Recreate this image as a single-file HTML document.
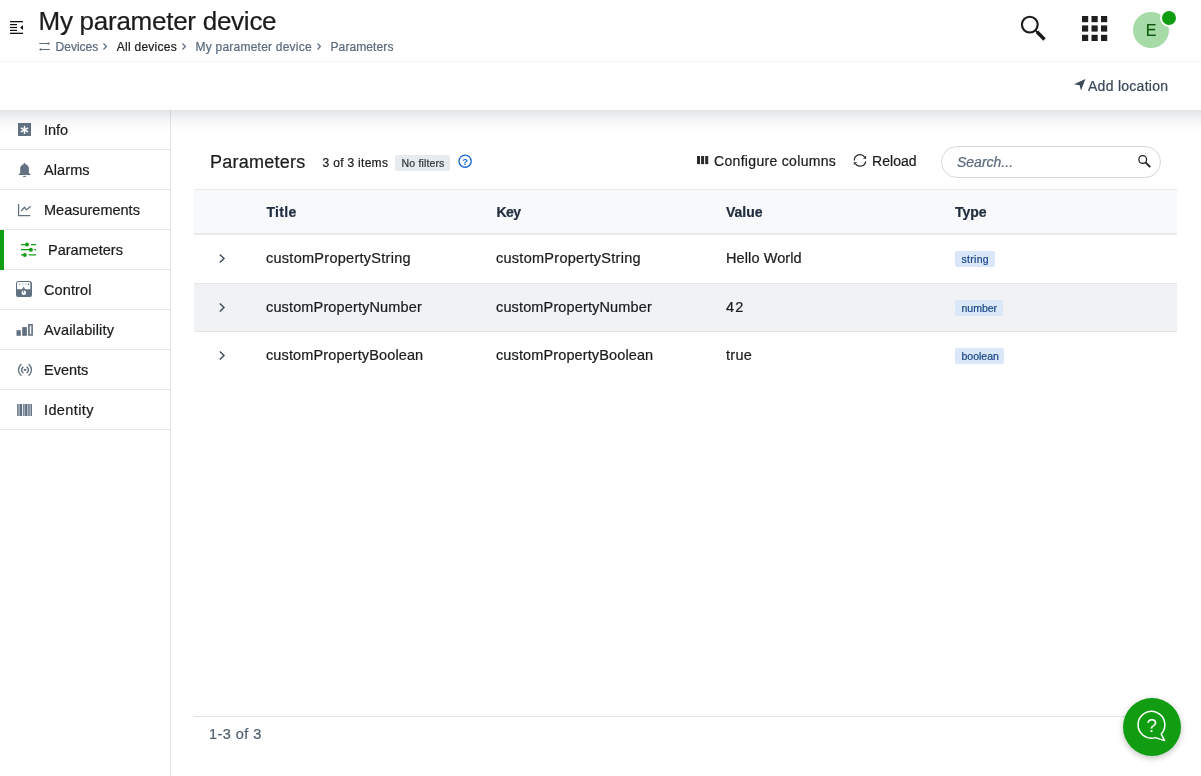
<!DOCTYPE html>
<html lang="en">
<head>
<meta charset="utf-8">
<title>My parameter device</title>
<style>
*{box-sizing:border-box;margin:0;padding:0}
html,body{width:1201px;height:776px;overflow:hidden;background:#fff}
body{font-family:"Liberation Sans",sans-serif;color:#1a1c1e;position:relative;font-size:14px}
.abs{position:absolute;white-space:nowrap;line-height:1}
.abs,.nav span,#search span,#nofilter span,.tag span,#avatar span{-webkit-text-stroke:.22px currentColor}
svg{position:absolute;overflow:visible}
/* header */
#header{position:absolute;left:0;top:0;width:1201px;height:62px;background:#fff;border-bottom:1px solid #f5f6f8;box-shadow:inset 0 -1px 0 0 #fbfcfc}
#title{left:38.5px;top:8px;font-size:26px;color:#1a1c1e;letter-spacing:-.26px}
.bc{top:41px;font-size:12px;color:#5c6b7d}
.bc.dark{color:#1a1c1e}
#avatar{position:absolute;left:1133px;top:12px;width:36px;height:36px;border-radius:50%;background:#a6daa6}
#avatar span{position:absolute;left:0;width:36px;text-align:center;top:10.5px;font-size:16px;line-height:1;color:#0d5c0d}
#dot{position:absolute;left:1160px;top:9px;width:18px;height:18px;border-radius:50%;background:#119d11;border:2px solid #fff}
/* action bar */
#actionbar{position:absolute;left:0;top:62px;width:1201px;height:48px;background:#fff;z-index:5}
#abshadow{position:absolute;left:0;top:110px;width:1201px;height:22px;z-index:5;pointer-events:none;background:linear-gradient(to bottom,rgba(45,55,72,.14) 0,rgba(45,55,72,.09) 22%,rgba(45,55,72,.048) 48%,rgba(45,55,72,.016) 75%,rgba(45,55,72,0) 100%)}
#addloc{left:1088px;top:78.6px;font-size:14px;color:#3b4959;z-index:6;letter-spacing:.27px}
/* sidebar */
#sidebar{position:absolute;left:0;top:110px;width:171px;height:666px;background:#fff;border-right:1px solid #e4e6e9}
.nav{position:absolute;left:0;width:170px;height:40px;border-bottom:1px solid #e4e6e9}
.nav span{position:absolute;left:44px;top:12.5px;font-size:14.5px;line-height:1;color:#1a1c1e;white-space:nowrap}
.nav.active span{left:48px}
#activebar{position:absolute;left:0;top:230px;width:4px;height:40px;background:#119d11}
/* main */
#ptitle{left:210px;top:152.5px;font-size:18px;color:#1a1c1e;letter-spacing:.25px}
#count{left:322.6px;top:156.5px;font-size:12px;color:#1a1c1e;letter-spacing:.3px}
#nofilter{position:absolute;left:395px;top:155px;width:55px;height:16px;background:#e8ebee;border-radius:2px}
#nofilter span{position:absolute;left:6.6px;letter-spacing:.15px;top:3px;font-size:10.5px;line-height:1;color:#303841;white-space:nowrap}
.tool{top:153.8px;font-size:14px;color:#1a1c1e}
#search{position:absolute;left:941px;top:146px;width:220px;height:32px;border:1px solid #d3d8de;border-radius:16px;background:#fff}
#search span{position:absolute;left:15px;top:7.9px;font-size:14px;line-height:1;font-style:italic;color:#5c6b7d}
#thead{position:absolute;left:194px;top:189px;width:983px;height:46px;background:#f8f9fb;border-top:1px solid #e6e8eb;border-bottom:2px solid #e6e8eb}
.th{top:205px;font-size:14px;font-weight:bold;color:#212e3f}
.row{position:absolute;left:194px;width:983px;height:49px}
.row.alt{background:#f1f2f4;border-top:1px solid #e4e6e9;border-bottom:1px solid #e4e6e9}
.td{font-size:14.5px;color:#1a1c1e;letter-spacing:.27px}
.tag{position:absolute;height:16px;background:#d9e7f8;border-radius:2px}
.tag span{position:absolute;left:6.5px;top:2.5px;font-size:10.5px;line-height:1;color:#1c478a;white-space:nowrap}
#tfoot{position:absolute;left:194px;top:716px;width:983px;height:1px;background:#e0e3e7}
#pager{left:209px;top:727px;font-size:14.5px;color:#4f5e70;letter-spacing:.45px}
#fab{position:absolute;left:1123px;top:698px;width:58px;height:58px;border-radius:50%;background:#119d11;box-shadow:0 2px 6px rgba(0,0,0,.25);z-index:9}
#wrap{position:absolute;left:0;top:0;width:1201px;height:776px;will-change:transform}</style>
</head>
<body><div id="wrap">
<div id="header"></div>
<!-- outdent icon -->
<svg style="left:10px;top:21px" width="13" height="13" viewBox="0 0 13 13"><g fill="#111"><rect x="0" y="0" width="13" height="1.3"/><rect x="0" y="3" width="7" height="1.2"/><rect x="0" y="5.9" width="7" height="1.2"/><rect x="0" y="8.8" width="7" height="1.2"/><rect x="0" y="11.7" width="13" height="1.3"/><path d="M13 4.3 L13 8.9 L10.1 6.6 Z"/></g></svg>
<div id="title" class="abs">My parameter device</div>
<!-- swap icon -->
<svg style="left:39px;top:42px" width="11" height="9" viewBox="0 0 11 9"><g fill="none" stroke="#5c6b7d" stroke-width="1.05"><path d="M0.2 1.5 H10 M10.8 7.5 H1"/></g><g fill="#5c6b7d"><path d="M8.8 -0.1 L11 1.5 L8.8 3.1 Z"/><path d="M2.2 5.9 L0 7.5 L2.2 9.1 Z"/></g></svg>
<div class="abs bc" style="left:55.6px">Devices</div>
<svg style="left:103px;top:43.2px" width="4" height="7" viewBox="0 0 4 7"><path d="M0.5 0.5 L3.4 3.5 L0.5 6.5" fill="none" stroke="#5c6b7d" stroke-width="1.2"/></svg>
<div class="abs bc dark" style="left:116.8px;letter-spacing:.25px">All devices</div>
<svg style="left:182px;top:43.2px" width="4" height="7" viewBox="0 0 4 7"><path d="M0.5 0.5 L3.4 3.5 L0.5 6.5" fill="none" stroke="#5c6b7d" stroke-width="1.2"/></svg>
<div class="abs bc" style="left:195.6px;letter-spacing:.22px">My parameter device</div>
<svg style="left:316.6px;top:43.2px" width="4" height="7" viewBox="0 0 4 7"><path d="M0.5 0.5 L3.4 3.5 L0.5 6.5" fill="none" stroke="#5c6b7d" stroke-width="1.2"/></svg>
<div class="abs bc" style="left:330.5px;letter-spacing:.1px">Parameters</div>

<!-- header right icons -->
<svg style="left:1020px;top:15px" width="27" height="27" viewBox="0 0 27 27"><circle cx="9.8" cy="9.6" r="7.9" fill="none" stroke="#1a1a1a" stroke-width="2.15"/><path d="M15.2 15 L18 17.8" stroke="#1a1a1a" stroke-width="1.7"/><path d="M16.9 16.8 L24.5 24.4" stroke="#1a1a1a" stroke-width="3.5" stroke-linecap="butt"/></svg>
<svg style="left:1082px;top:16px" width="26" height="26" viewBox="0 0 26 26"><g fill="#1f1f1f"><rect x="0" y="0" width="6.2" height="6.2"/><rect x="9.5" y="0" width="6.2" height="6.2"/><rect x="19" y="0" width="6.2" height="6.2"/><rect x="0" y="9.4" width="6.2" height="6.2"/><rect x="9.5" y="9.4" width="6.2" height="6.2"/><rect x="19" y="9.4" width="6.2" height="6.2"/><rect x="0" y="18.8" width="6.2" height="6.2"/><rect x="9.5" y="18.8" width="6.2" height="6.2"/><rect x="19" y="18.8" width="6.2" height="6.2"/></g></svg>
<div id="avatar"><span>E</span></div>
<div id="dot"></div>

<div id="actionbar"></div><div id="abshadow"></div>
<svg style="left:1074px;top:79px;z-index:6" width="12" height="12" viewBox="0 0 12 12"><path d="M11.4 0 L0 5.2 L5.6 6.2 L7 11.6 Z" fill="#3b4959"/></svg>
<div id="addloc" class="abs">Add location</div>

<div id="sidebar">
  <div class="nav" style="top:0"><span>Info</span></div>
  <div class="nav" style="top:40px"><span style="letter-spacing:.1px">Alarms</span></div>
  <div class="nav" style="top:80px"><span>Measurements</span></div>
  <div class="nav active" style="top:120px"><span>Parameters</span></div>
  <div class="nav" style="top:160px"><span style="letter-spacing:.12px">Control</span></div>
  <div class="nav" style="top:200px"><span style="letter-spacing:.15px">Availability</span></div>
  <div class="nav" style="top:240px"><span>Events</span></div>
  <div class="nav" style="top:280px"><span style="letter-spacing:.38px">Identity</span></div>
</div>
<div id="activebar"></div>
<!-- sidebar icons -->
<!-- info -->
<svg style="left:18px;top:123px" width="13" height="13" viewBox="0 0 13 13"><rect width="13" height="13" fill="#627181"/><g stroke="#fff" stroke-width="1.5" stroke-linecap="butt"><path d="M6.5 2.9 V10.9"/><path d="M2.9 4.9 L10.1 8.9"/><path d="M10.1 4.9 L2.9 8.9"/></g></svg>
<!-- bell -->
<svg style="left:18px;top:162px" width="13" height="16" viewBox="0 0 13 16"><g fill="#627181"><circle cx="6.5" cy="1.9" r="1"/><path d="M2.2 11 V6.3 A4.35 4 0 0 1 10.9 6.3 V11 L12.5 12.2 V12.9 H0.6 V12.2 Z"/><ellipse cx="6.5" cy="14.4" rx="1.5" ry="0.65"/></g></svg>
<!-- chart -->
<svg style="left:18px;top:203px" width="13" height="13" viewBox="0 0 13 13"><path d="M0.6 0.9 V12.5 H12.3" fill="none" stroke="#627181" stroke-width="1.25"/><path d="M3.1 8 L6.5 4.3 L8.6 6.9 L12.6 3.2" fill="none" stroke="#627181" stroke-width="1.3"/></svg>
<!-- sliders -->
<svg style="left:21px;top:243px" width="16" height="14" viewBox="0 0 16 14"><g stroke="#119d11" stroke-width="1.2" fill="none"><path d="M0 1.6 H6 M10 1.6 H15 M0 6.7 H9.9 M13.3 6.7 H15 M0 11.9 H3.8 M7.7 11.9 H15"/></g><g fill="#119d11"><circle cx="6" cy="1.6" r="2"/><circle cx="9.9" cy="6.7" r="2"/><circle cx="3.8" cy="11.9" r="2"/></g></svg>
<!-- control -->
<svg style="left:16px;top:280.8px" width="16" height="16" viewBox="0 0 16 16"><rect x="0" y="0" width="16" height="16" rx="2.6" fill="#627181"/><path d="M2 1.1 H13.4 A0.9 0.9 0 0 1 14.3 2 V8.2 H9.2 L7.6 5.6 L6.1 8.2 H1.1 V2 A0.9 0.9 0 0 1 2 1.1 Z" fill="#fff"/><g fill="#627181"><rect x="3.1" y="2.5" width="1" height="1.7" opacity=".55"/><rect x="6.3" y="2.5" width="1" height="1.7" opacity=".55"/><rect x="9.4" y="2.5" width="1" height="1.7" opacity=".55"/><rect x="12" y="2.5" width="1" height="1.7"/></g><circle cx="7.8" cy="11.8" r="2.3" fill="#fff"/><path d="M7.8 11.8 L7.3 9.8" stroke="#627181" stroke-width="0.9"/></svg>
<!-- availability -->
<svg style="left:16px;top:324px" width="17" height="12" viewBox="0 0 17 12"><g fill="#627181"><rect x="0.5" y="6.2" width="4.3" height="5.6"/><rect x="6.2" y="3.1" width="4.7" height="8.7"/><path fill-rule="evenodd" d="M12.1 0 H16.9 V11.8 H12.1 Z M13.8 1.4 V10.2 H15.3 V1.4 Z"/></g></svg>
<!-- events -->
<svg style="left:16.5px;top:364px" width="16" height="12" viewBox="0 0 16 12"><g fill="none" stroke="#627181" stroke-linecap="round"><path stroke-width="1.35" d="M4 0.5 C0.7 3.6 0.7 8.2 4 11.3"/><path stroke-width="1.35" d="M12 0.5 C15.3 3.6 15.3 8.2 12 11.3"/><path stroke-width="1.5" d="M6 3.2 C4.1 4.6 4.1 7.2 6 8.6"/><path stroke-width="1.5" d="M10 3.2 C11.9 4.6 11.9 7.2 10 8.6"/></g><ellipse cx="8" cy="5.9" rx="1.4" ry="1.1" fill="#627181"/></svg>
<!-- identity -->
<svg style="left:17px;top:404px" width="15" height="12" viewBox="0 0 15 12" shape-rendering="crispEdges"><rect x="0" y="0" width="1" height="12" fill="#7e8a99"/><rect x="1" y="0" width="1" height="12" fill="#8e99a6"/><rect x="2" y="0" width="1" height="12" fill="#a5aeb9"/><rect x="3" y="0" width="1" height="12" fill="#5f6e80"/><rect x="4" y="0" width="1" height="12" fill="#5f6e80"/><rect x="5" y="0" width="1" height="12" fill="#e6e9ec"/><rect x="6" y="0" width="1" height="12" fill="#7e8a99"/><rect x="7" y="0" width="1" height="12" fill="#a5aeb9"/><rect x="8" y="0" width="1" height="12" fill="#6e7b8b"/><rect x="9" y="0" width="1" height="12" fill="#5f6e80"/><rect x="10" y="0" width="1" height="12" fill="#b5bcc5"/><rect x="11" y="0" width="1" height="12" fill="#808c9a"/><rect x="12" y="0" width="1" height="12" fill="#8893a0"/><rect x="13" y="0" width="1" height="12" fill="#aab2bc"/><rect x="14" y="0" width="1" height="12" fill="#66748a"/></svg>

<div id="ptitle" class="abs">Parameters</div>
<div id="count" class="abs">3 of 3 items</div>
<div id="nofilter"><span>No filters</span></div>
<!-- help -->
<svg style="left:458px;top:154.1px" width="14" height="14" viewBox="0 0 14 14"><circle cx="7.1" cy="7.2" r="6.1" fill="none" stroke="#1467d6" stroke-width="1.35"/><text x="7.1" y="10.6" text-anchor="middle" font-family="Liberation Sans, sans-serif" font-size="9.5" font-weight="bold" fill="#1467d6">?</text></svg>
<!-- columns icon -->
<svg style="left:696.65px;top:155.95px" width="12" height="9" viewBox="0 0 12 9"><g fill="#2a2a2a"><rect x="0" y="0" width="3" height="8.15"/><rect x="4.1" y="0" width="3" height="8.15"/><rect x="8.2" y="0" width="3" height="8.15"/></g></svg>
<div class="abs tool" style="left:714px;letter-spacing:.32px">Configure columns</div>
<!-- reload icon -->
<svg style="left:853px;top:154px" width="14" height="13" viewBox="0 0 14 13"><g fill="none" stroke="#2a2a2a" stroke-width="1.2"><path d="M1.3 6.4 A5.7 5.7 0 0 1 11.7 3.1"/><path d="M12.7 7.3 A5.7 5.7 0 0 1 2.5 9.9"/></g><path d="M13.1 1.5 V4.7 H10 Z" fill="#2a2a2a"/><path d="M0.9 11.1 V8.2 H4.2 Z" fill="#2a2a2a"/></svg>
<div class="abs tool" style="left:872px;letter-spacing:.05px">Reload</div>
<div id="search"><span>Search...</span></div>
<svg style="left:1138px;top:155px" width="14" height="13" viewBox="0 0 14 13"><circle cx="4.7" cy="4.5" r="3.85" fill="none" stroke="#1f1f1f" stroke-width="1.25"/><path d="M7.5 7.4 L12.25 12.1" stroke="#1f1f1f" stroke-width="1.9"/></svg>

<div id="thead"></div>
<div class="abs th" style="left:266.5px;letter-spacing:.3px">Title</div>
<div class="abs th" style="left:496.5px;letter-spacing:-.6px">Key</div>
<div class="abs th" style="left:726px">Value</div>
<div class="abs th" style="left:955px">Type</div>

<div class="row" style="top:235px"></div>
<div class="row alt" style="top:283px"></div>
<div class="row" style="top:332px"></div>

<svg style="left:219px;top:253.5px" width="6" height="9" viewBox="0 0 6 9"><path d="M0.8 0.6 L5 4.5 L0.8 8.4" fill="none" stroke="#3b4959" stroke-width="1.4"/></svg>
<svg style="left:219px;top:302.5px" width="6" height="9" viewBox="0 0 6 9"><path d="M0.8 0.6 L5 4.5 L0.8 8.4" fill="none" stroke="#3b4959" stroke-width="1.4"/></svg>
<svg style="left:219px;top:350.5px" width="6" height="9" viewBox="0 0 6 9"><path d="M0.8 0.6 L5 4.5 L0.8 8.4" fill="none" stroke="#3b4959" stroke-width="1.4"/></svg>

<div class="abs td" style="left:266px;top:250.5px">customPropertyString</div>
<div class="abs td" style="left:496px;top:250.5px">customPropertyString</div>
<div class="abs td" style="left:726px;top:250.5px;letter-spacing:.1px">Hello World</div>
<div class="tag" style="left:955px;top:251px;width:40px"><span style="letter-spacing:.3px">string</span></div>

<div class="abs td" style="left:266px;top:299.5px;letter-spacing:.14px">customPropertyNumber</div>
<div class="abs td" style="left:496px;top:299.5px;letter-spacing:.14px">customPropertyNumber</div>
<div class="abs td" style="left:726px;top:299.5px;letter-spacing:1.2px">42</div>
<div class="tag" style="left:955px;top:300px;width:48px"><span>number</span></div>

<div class="abs td" style="left:266px;top:347.5px;letter-spacing:.12px">customPropertyBoolean</div>
<div class="abs td" style="left:496px;top:347.5px;letter-spacing:.12px">customPropertyBoolean</div>
<div class="abs td" style="left:726px;top:347.5px">true</div>
<div class="tag" style="left:955px;top:348px;width:49px"><span>boolean</span></div>

<div id="tfoot"></div>
<div id="pager" class="abs">1-3 of 3</div>
<div id="fab"></div>
<svg style="left:1123px;top:698px;z-index:10" width="58" height="58" viewBox="0 0 58 58"><path d="M38.2 36 A13.4 13.4 0 1 0 32.4 39.6 L41.6 42.6 Z" fill="none" stroke="#fff" stroke-width="1.5" stroke-linejoin="round"/><text x="28.8" y="34.3" text-anchor="middle" font-family="Liberation Sans, sans-serif" font-size="19" fill="#fff">?</text></svg>
</div></body>
</html>
